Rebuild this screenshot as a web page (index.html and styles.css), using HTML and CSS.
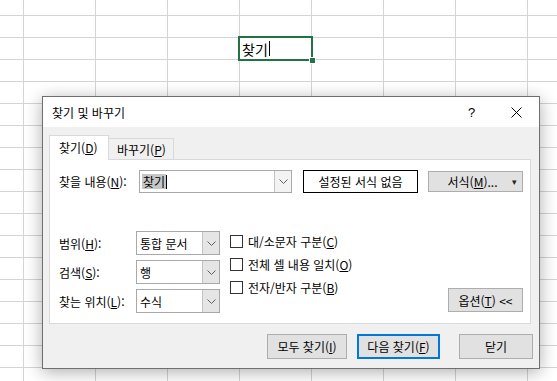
FILE: index.html
```html
<!DOCTYPE html>
<html lang="ko">
<head>
    <meta charset="UTF-8">
    <meta name="viewport" content="width=device-width, initial-scale=1.0">
    <title>찾기 및 바꾸기</title>
    <link rel="stylesheet" href="styles.css">
</head>
<body>
    <div class="sheet">
        <div class="active-cell">
            <span class="cell-text">찾기</span><span class="caret"></span>
            <span class="fill-handle"></span>
        </div>
    </div>

    <div class="dialog">
        <div class="titlebar">
            <span class="title">찾기 및 바꾸기</span>
            <span class="title-btn">?</span>
            <span class="title-btn">
                <svg width="11" height="11" viewBox="0 0 11 11"><path d="M0.5 0.5 L10.5 10.5 M10.5 0.5 L0.5 10.5" stroke="#000" stroke-width="1" fill="none"/></svg>
            </span>
        </div>

        <div class="dialog-body">
            <div class="tabs">
                <div class="tab active">찾기(<u>D</u>)</div>
                <div class="tab">바꾸기(<u>P</u>)</div>
            </div>

            <div class="panel">
                <div class="find-row">
                    <label class="find-label">찾을 내용(<u>N</u>):</label>
                    <div class="combo">
                        <div class="combo-value"><span class="selected">찾기</span><span class="caret"></span></div>
                        <div class="combo-arrow plain">
                            <svg width="9" height="5" viewBox="0 0 9 5"><path d="M0.5 0.5 L4.5 4.5 L8.5 0.5" stroke="#606060" fill="none"/></svg>
                        </div>
                    </div>
                    <div class="format-preview">설정된 서식 없음</div>
                    <div class="button format-btn">서식(<u>M</u>)...<span class="drop">&#9662;</span></div>
                </div>

                <div class="options">
                    <div class="option-fields">
                        <div class="field">
                            <label>범위(<u>H</u>):</label>
                            <div class="combo select">
                                <div class="combo-value">통합 문서</div>
                                <div class="combo-arrow">
                                    <svg width="9" height="5" viewBox="0 0 9 5"><path d="M0.5 0.5 L4.5 4.5 L8.5 0.5" stroke="#606060" fill="none"/></svg>
                                </div>
                            </div>
                        </div>
                        <div class="field">
                            <label>검색(<u>S</u>):</label>
                            <div class="combo select">
                                <div class="combo-value">행</div>
                                <div class="combo-arrow">
                                    <svg width="9" height="5" viewBox="0 0 9 5"><path d="M0.5 0.5 L4.5 4.5 L8.5 0.5" stroke="#606060" fill="none"/></svg>
                                </div>
                            </div>
                        </div>
                        <div class="field">
                            <label>찾는 위치(<u>L</u>):</label>
                            <div class="combo select">
                                <div class="combo-value">수식</div>
                                <div class="combo-arrow">
                                    <svg width="9" height="5" viewBox="0 0 9 5"><path d="M0.5 0.5 L4.5 4.5 L8.5 0.5" stroke="#606060" fill="none"/></svg>
                                </div>
                            </div>
                        </div>
                    </div>

                    <div class="checks">
                        <div class="check"><span class="box"></span>대/소문자 구분(<u>C</u>)</div>
                        <div class="check"><span class="box"></span>전체 셀 내용 일치(<u>O</u>)</div>
                        <div class="check"><span class="box"></span>전자/반자 구분(<u>B</u>)</div>
                    </div>

                    <div class="button options-btn">옵션(<u>T</u>) &lt;&lt;</div>
                </div>
            </div>

            <div class="actions">
                <div class="button find-all">모두 찾기(<u>I</u>)</div>
                <div class="button find-next default">다음 찾기(<u>F</u>)</div>
                <div class="button close-btn">닫기</div>
            </div>
        </div>
    </div>
</body>
</html>
```

FILE: styles.css
```css
body {
    margin: 0;
    padding: 0;
    width: 557px;
    height: 381px;
    overflow: hidden;
    position: relative;
    font-family: "Noto Sans CJK KR", "Noto Sans", sans-serif;
    font-size: 12px;
    color: #000;
    background-color: #fff;
}

u {
    text-decoration: underline;
    text-underline-offset: 1px;
}

/* spreadsheet grid */
.sheet {
    width: 100%;
    height: 100%;
    background-image:
        linear-gradient(to right, #d4d4d4 1px, transparent 1px),
        linear-gradient(to bottom, #d4d4d4 1px, transparent 1px);
    background-size: 72px 22px;
    background-position: 23px 15px;
}

.active-cell {
    position: absolute;
    left: 238px;
    top: 36px;
    width: 75px;
    height: 25px;
    box-sizing: border-box;
    border: 2px solid #217346;
    background-color: #fff;
    display: flex;
    align-items: center;
    padding-left: 2px;
    font-size: 14px;
}

.active-cell .caret {
    height: 15px;
    margin-left: 1px;
}

.fill-handle {
    position: absolute;
    right: -4px;
    bottom: -4px;
    width: 5px;
    height: 5px;
    background-color: #217346;
    box-shadow: 0 0 0 1px #fff;
}

.caret {
    display: inline-block;
    width: 1px;
    height: 14px;
    background-color: #000;
}

/* dialog */
.dialog {
    position: absolute;
    left: 42px;
    top: 96px;
    width: 498px;
    height: 273px;
    box-sizing: border-box;
    border: 1px solid #6f6f6f;
    background-color: #f0f0f0;
    box-shadow: 0 3px 16px rgba(0, 0, 0, 0.32);
}

.titlebar {
    height: 30px;
    background-color: #fff;
    display: flex;
    align-items: center;
    padding-left: 9px;
}

.title {
    flex: 1;
}

.title-btn {
    width: 45px;
    height: 30px;
    display: flex;
    align-items: center;
    justify-content: center;
    font-family: "Liberation Sans", sans-serif;
    font-size: 13px;
}

.dialog-body {
    padding: 8px 6px 0 6px;
}

.tabs {
    display: flex;
    align-items: flex-end;
    margin-bottom: -1px;
    position: relative;
}

.tab {
    box-sizing: border-box;
    height: 22px;
    width: 65px;
    padding-left: 8px;
    border: 1px solid #d9d9d9;
    border-left: none;
    background-color: #f0f0f0;
    display: flex;
    align-items: center;
}

.tab.active {
    height: 25px;
    width: 60px;
    padding-left: 9px;
    padding-bottom: 2px;
    border-left: 1px solid #d9d9d9;
    border-bottom: none;
    background-color: #fff;
}

.panel {
    width: 482px;
    height: 165px;
    box-sizing: border-box;
    border: 1px solid #d9d9d9;
    background-color: #fff;
    padding: 10px 7px 10px 9px;
    display: flex;
    flex-direction: column;
    justify-content: space-between;
}

.find-row {
    display: flex;
    align-items: center;
    height: 23px;
}

.find-label {
    width: 80px;
}

.combo {
    box-sizing: border-box;
    width: 153px;
    height: 23px;
    border: 1px solid #a9a9a9;
    background-color: #fff;
    display: flex;
}

.combo-value {
    flex: 1;
    display: flex;
    align-items: center;
    padding-left: 2px;
}

.selected {
    background-color: #c6c6c6;
    font-size: 12px;
    line-height: 15px;
    padding: 0 1px;
}

.combo-arrow {
    width: 16px;
    border-left: 1px solid #c4c4c4;
    background-color: #e5e5e5;
    display: flex;
    align-items: center;
    justify-content: center;
}

.combo-arrow.plain {
    background-color: #f3f3f3;
}

.format-preview {
    box-sizing: border-box;
    width: 115px;
    height: 23px;
    margin-left: 11px;
    border: 1px solid #000;
    display: flex;
    align-items: center;
    justify-content: center;
}

.button {
    box-sizing: border-box;
    border: 1px solid #adadad;
    background-color: #e1e1e1;
    display: flex;
    align-items: center;
    justify-content: center;
}

.format-btn {
    width: 95px;
    height: 21px;
    margin-left: 10px;
    position: relative;
    padding-right: 6px;
}

.drop {
    position: absolute;
    right: 5px;
    font-size: 9px;
    color: #222;
}

.options {
    display: flex;
    align-items: flex-end;
}

.option-fields {
    display: flex;
    flex-direction: column;
    gap: 5px;
}

.field {
    display: flex;
    align-items: center;
}

.field label {
    width: 77px;
}

.combo.select {
    width: 84px;
    height: 24px;
}

.combo.select .combo-value {
    padding-left: 3px;
}

.checks {
    display: flex;
    flex-direction: column;
    gap: 5px;
    margin-left: 10px;
    align-self: flex-start;
    margin-top: 1px;
}

.check {
    display: flex;
    align-items: center;
    height: 18px;
}

.box {
    box-sizing: border-box;
    width: 13px;
    height: 13px;
    border: 1px solid #333;
    background-color: #fff;
    margin-right: 5px;
}

.options-btn {
    width: 75px;
    height: 24px;
    margin-left: auto;
    margin-bottom: 1px;
}

.actions {
    display: flex;
    justify-content: flex-end;
    margin-top: 10px;
    padding-right: 0;
}

.actions .button {
    height: 25px;
}

.find-all {
    width: 80px;
}

.find-next {
    width: 83px;
    margin-left: 10px;
}

.find-next.default {
    border: 2px solid #0078d7;
}

.close-btn {
    width: 74px;
    margin-left: 19px;
}
```
